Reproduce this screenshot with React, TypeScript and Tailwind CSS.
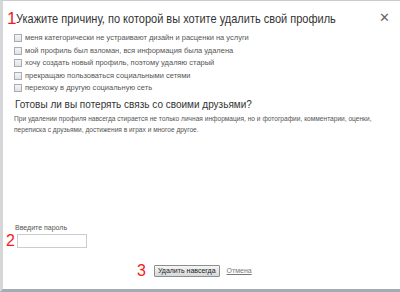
const reasons = [
  "меня категорически не устраивают дизайн и расценки на услуги",
  "мой профиль был взломан, вся информация была удалена",
  "хочу создать новый профиль, поэтому удаляю старый",
  "прекращаю пользоваться социальными сетями",
  "перехожу в другую социальную сеть",
];

export default function App() {
  return (
    <div className="w-[400px] h-[292px] bg-white overflow-hidden" style={{ fontFamily: '"Liberation Sans", Arial, sans-serif' }}>
      <div className="h-full flex flex-col border-t border-[#c8ccd0] border-l-[3px] border-l-[#d4d6d8] border-b-[3px] border-b-[#a3acb4]">
        {/* Title row */}
        <div className="flex items-start pt-[9px] pl-[4px] pr-[10px]">
          <span className="text-[#f21b1b] text-[17px] leading-[18px] w-[9px]">1</span>
          <h1 className="text-[#333] text-[11px] leading-[18px] mt-[1px] whitespace-nowrap scale-y-[1.2] origin-bottom">
            Укажите причину, по которой вы хотите удалить свой профиль
          </h1>
          <span className="ml-auto text-[#666] text-[13px] leading-[13px] mt-[1px]">✕</span>
        </div>

        {/* Reasons */}
        <div className="flex flex-col gap-[4.25px] pl-[11px] mt-[5px]">
          {reasons.map((r) => (
            <label key={r} className="flex items-center gap-[3px] h-[8.25px]">
              <span className="w-[8px] h-[8px] border border-[#a8adb3] bg-gradient-to-b from-[#f3f4f5] to-[#dfe2e5]" />
              <span className="text-[#555] text-[7.5px] leading-[8px]">{r}</span>
            </label>
          ))}
        </div>

        {/* Friends */}
        <h2 className="pl-[12px] mt-[6px] text-[#333] text-[10px] leading-[13px] whitespace-nowrap">
          Готовы ли вы потерять связь со своими друзьями?
        </h2>
        <p className="pl-[11px] pr-[10px] mt-[2px] text-[#555] text-[6.6px] leading-[11px]">
          При удалении профиля навсегда стирается не только личная информация, но и фотографии, комментарии, оценки,
          переписка с друзьями, достижения в играх и многое другое.
        </p>

        {/* Password */}
        <div className="mt-auto flex flex-col pl-[12px]">
          <span className="text-[#555] text-[7px] leading-[9px]">Введите пароль</span>
          <div className="flex items-center -ml-[9px] mt-[1px]">
            <span className="text-[#f21b1b] text-[16px] leading-[16px] w-[11px]">2</span>
            <div className="w-[70px] h-[14px] border border-[#c9cdd1] bg-white" />
          </div>
        </div>

        {/* Actions */}
        <div className="flex items-center pl-[134px] mt-[14px] mb-[10px]">
          <span className="text-[#f21b1b] text-[16px] leading-[16px] mr-[8px]">3</span>
          <button className="h-[12px] px-[3px] border border-[#8b8f94] rounded-[1px] bg-gradient-to-b from-[#f6f6f6] to-[#d6d8da] text-[#222] text-[7px] leading-[10px]">
            Удалить навсегда
          </button>
          <a className="ml-[7px] text-[#777] text-[7px] underline">Отмена</a>
        </div>
      </div>
    </div>
  );
}
